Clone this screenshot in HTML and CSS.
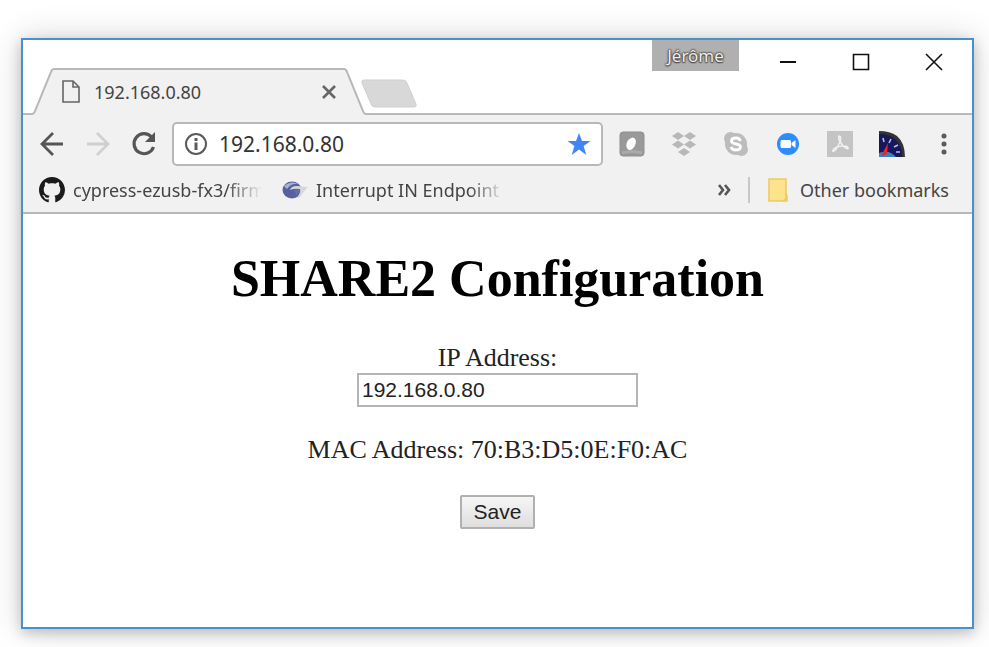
FILE: index.html
```html
<!DOCTYPE html>
<html lang="en">
<head>
    <meta charset="UTF-8">
    <meta name="viewport" content="width=device-width, initial-scale=1.0">
    <title>192.168.0.80</title>
    <link rel="stylesheet" href="styles.css">
</head>
<body>
    <div class="window">
        <div class="titlebar">
            <div class="tab">
                <svg class="tab-edge" width="22" height="47" viewBox="0 0 22 47">
                    <path d="M0 47V45Q2 45 3 43L20 3Q21 1 22 1V47Z" fill="#f1f1f1"/>
                    <path d="M0 46Q2 46 3 43L19 4Q20 1 22 1" fill="none" stroke="#b8b8b8" stroke-width="2"/>
                </svg>
                <div class="tab-body">
                    <svg width="18" height="24" viewBox="0 0 18 24" fill="none" stroke="#666" stroke-width="1.600">
                        <path d="M1 1H11L17 7V22H1Z"/>
                        <path d="M11 1V7H17"/>
                    </svg>
                    <span class="tab-title">192.168.0.80</span>
                    <button class="tab-close" aria-label="Close tab">
                        <svg width="14" height="14" viewBox="0 0 14 14" stroke="#666" stroke-width="2.600">
                            <path d="M1 1L13 13M13 1L1 13"/>
                        </svg>
                    </button>
                </div>
                <svg class="tab-edge" width="22" height="47" viewBox="0 0 22 47">
                    <path d="M22 47V45Q20 45 19 43L2 3Q1 1 0 1V47Z" fill="#f1f1f1"/>
                    <path d="M22 46Q20 46 19 43L3 4Q2 1 0 1" fill="none" stroke="#b8b8b8" stroke-width="2"/>
                </svg>
            </div>
            <button class="new-tab" aria-label="New tab">
                <svg width="58" height="30" viewBox="0 0 58 30">
                    <path d="M4 1H43Q46 1 47 4L56 25Q57 28 54 28H15Q12 28 11 25L2 4Q1 1 4 1Z" fill="#d8d8d8" stroke="#d0d0d0"/>
                </svg>
            </button>
            <div class="window-controls">
                <button class="profile">Jérôme</button>
                <button class="control" aria-label="Minimize">
                    <svg width="18" height="18" viewBox="0 0 18 18"><path d="M1 9H17" stroke="#111" stroke-width="2"/></svg>
                </button>
                <button class="control" aria-label="Maximize">
                    <svg width="18" height="18" viewBox="0 0 18 18"><path d="M1.500 1.500H16.500V16.500H1.500Z" fill="none" stroke="#111" stroke-width="1.600"/></svg>
                </button>
                <button class="control" aria-label="Close">
                    <svg width="18" height="18" viewBox="0 0 18 18"><path d="M1 1L17 17M17 1L1 17" stroke="#111" stroke-width="1.600"/></svg>
                </button>
            </div>
        </div>

        <div class="toolbar">
            <button class="nav-button" aria-label="Back">
                <svg width="24" height="24" viewBox="0 0 24 24" fill="none" stroke="#555" stroke-width="2.800"><path d="M23 12H3M13 1L2 12L13 23"/></svg>
            </button>
            <button class="nav-button" aria-label="Forward">
                <svg width="24" height="24" viewBox="0 0 24 24" fill="none" stroke="#d0d0d0" stroke-width="2.800"><path d="M1 12H21M11 1L22 12L11 23"/></svg>
            </button>
            <button class="nav-button" aria-label="Reload">
                <svg width="26" height="26" viewBox="0 0 26 26">
                    <path d="M20.5 6A10 10 0 1 0 22.5 16" fill="none" stroke="#555" stroke-width="3.2"/>
                    <path d="M24 1V11H14Z" fill="#555"/>
                </svg>
            </button>
            <div class="omnibox">
                <svg width="24" height="24" viewBox="0 0 24 24">
                    <circle cx="12" cy="12" r="10" fill="none" stroke="#5a5a5a" stroke-width="2"/>
                    <path d="M10.5 6H13.5V9H10.5ZM10.5 10.5H13.5V18H10.5Z" fill="#5a5a5a"/>
                </svg>
                <input class="address" type="text" value="192.168.0.80" aria-label="Address">
                <button class="star" aria-label="Bookmark this page">
                    <svg width="24" height="24" viewBox="0 0 24 24"><path d="M12 1L15 9H23.500L16.600 14L19.300 23L12 17.600L4.700 23L7.400 14L.5 9H9Z" fill="#4285f4"/></svg>
                </button>
            </div>
            <div class="extensions">
                <button class="extension" aria-label="Extension">
                    <svg width="26" height="26" viewBox="0 0 26 26">
                        <rect x="1" y="1" width="24" height="24" rx="3" fill="#999" stroke="#8f8f8f"/>
                        <path d="M3 22Q13 19 23 22" fill="none" stroke="#aaa" stroke-width="3"/>
                        <path d="M14 6.500Q18 8 16.500 13Q14.500 19 10 19Q6 17 8 11Q10 7 14 6.500Z" fill="#fff"/>
                    </svg>
                </button>
                <button class="extension" aria-label="Dropbox">
                    <svg width="26" height="26" viewBox="0 0 26 26" fill="#b8b8b8">
                        <path d="M7 1L13 5L7 9L1 5ZM19 1L25 5L19 9L13 5ZM7 9.500L13 13.500L7 17.500L1 13.500ZM19 9.500L25 13.500L19 17.500L13 13.500ZM13 17L19 21L13 25L7 21Z"/>
                    </svg>
                </button>
                <button class="extension" aria-label="Skype">
                    <svg width="26" height="26" viewBox="0 0 26 26">
                        <circle cx="13" cy="13" r="11" fill="#bcbcbc"/>
                        <circle cx="7.500" cy="7.500" r="6.500" fill="#bcbcbc"/>
                        <circle cx="18.500" cy="18.500" r="6.500" fill="#bcbcbc"/>
                        <path d="M17.500 10Q16.500 7 13 7Q8.500 7 8.500 10Q8.500 12.300 13 13Q17.800 13.800 17.500 16.200Q17 19 13 19Q9 19 8 16" fill="none" stroke="#fff" stroke-width="2.800"/>
                    </svg>
                </button>
                <button class="extension" aria-label="Zoom">
                    <svg width="26" height="26" viewBox="0 0 26 26">
                        <circle cx="13" cy="13" r="11" fill="#2d8cff"/>
                        <rect x="5.500" y="9" width="10.500" height="8" rx="1.500" fill="#fff"/>
                        <path d="M16.500 12L20.500 9V17L16.500 14Z" fill="#fff"/>
                    </svg>
                </button>
                <button class="extension" aria-label="Acrobat">
                    <svg width="26" height="26" viewBox="0 0 26 26">
                        <rect width="26" height="26" fill="#c4c4c4"/>
                        <path d="M12 5Q14.500 5 13.300 10Q14.500 15 20 17.500Q22.500 18.500 20 15.500Q14 14 9 16.500Q5 19 6 20.500Q9 20.500 13 10.500Q11 7 12 5Z" fill="none" stroke="#f1f1f1" stroke-width="1.500"/>
                    </svg>
                </button>
                <button class="extension" aria-label="Speed test">
                    <svg width="26" height="26" viewBox="0 0 26 26">
                        <path d="M0 0Q11 0 18 5Q26 12 26 26H0Z" fill="#333"/>
                        <path d="M0 3Q10 3 16 8Q23 14 23 26H0Z" fill="#17175c"/>
                        <path d="M0 22Q10 18 17 26H0Z" fill="#3d7fc4"/>
                        <path d="M4 7L5 11M12 8L10 12M19 14L15 16M21 21L17 21" stroke="#b9bde0" stroke-width="1.600"/>
                        <path d="M9 12L8 23L2 25Z" fill="#e8262c"/>
                    </svg>
                </button>
                <button class="extension" aria-label="Menu">
                    <svg width="6" height="22" viewBox="0 0 6 22" fill="#5a5a5a"><circle cx="3" cy="3" r="2.500"/><circle cx="3" cy="11" r="2.500"/><circle cx="3" cy="19" r="2.500"/></svg>
                </button>
            </div>
        </div>

        <div class="bookmarks">
            <a class="bookmark" href="#">
                <svg width="26" height="26" viewBox="0 0 16 16">
                    <path fill="#1b1b1b" d="M8 0C3.580 0 0 3.580 0 8c0 3.540 2.290 6.530 5.470 7.590.4.070.55-.17.55-.38 0-.19-.01-.82-.01-1.490-2.010.37-2.530-.49-2.690-.94-.09-.23-.48-.94-.82-1.130-.28-.15-.68-.52-.01-.53.63-.01 1.080.58 1.230.82.72 1.210 1.870.87 2.330.66.07-.52.28-.87.51-1.070-1.780-.2-3.640-.89-3.640-3.950 0-.87.31-1.590.82-2.150-.08-.2-.36-1.020.08-2.120 0 0 .67-.21 2.200.82.64-.18 1.320-.27 2-.27s1.360.09 2 .27c1.530-1.040 2.200-.82 2.200-.82.44 1.100.16 1.920.08 2.120.51.56.82 1.270.82 2.150 0 3.070-1.870 3.750-3.650 3.950.29.25.54.73.54 1.480 0 1.070-.01 1.930-.01 2.200 0 .21.15.46.55.38A8.010 8.010 0 0 0 16 8c0-4.420-3.580-8-8-8z"/>
                </svg>
                <span class="bookmark-text">cypress-ezusb-fx3/firmware</span>
            </a>
            <a class="bookmark" href="#">
                <svg width="26" height="26" viewBox="0 0 26 26">
                    <ellipse cx="10" cy="13" rx="9.500" ry="8.500" fill="#56629f"/>
                    <path d="M2 9Q9 3 17 7Q9 6 5 12Z" fill="#a9b0d2"/>
                    <path d="M8 13Q9 9 15 9L26 10Q22 14 18 20L15 21Q19 15 18 12Q12 11 8 13Z" fill="#d5d7dd"/>
                    <path d="M12 13L18 12Q17 16 13 21Q15 16 12 13Z" fill="#66719f"/>
                </svg>
                <span class="bookmark-text">Interrupt IN Endpoint</span>
            </a>
            <div class="bookmarks-end">
                <button class="more" aria-label="More bookmarks">
                    <svg width="16" height="12" viewBox="0 0 16 12" fill="none" stroke="#555" stroke-width="2.600"><path d="M2 1L6 6L2 11M8 1L12 6L8 11"/></svg>
                </button>
                <a class="other" href="#">
                    <svg width="20" height="24" viewBox="0 0 20 24">
                        <path d="M1 1H18V16L19 18V23H1Z" fill="#fde48c" stroke="#ecc95f" stroke-width="1.500"/>
                        <path d="M18 15V19Q18 22 15 23" fill="none" stroke="#ecc95f" stroke-width="1.500"/>
                    </svg>
                    Other bookmarks
                </a>
            </div>
        </div>

        <form class="page">
            <h1>SHARE2 Configuration</h1>
            <label for="ip">IP Address:</label>
            <input class="ip" id="ip" type="text" value="192.168.0.80">
            <p>MAC Address: 70:B3:D5:0E:F0:AC</p>
            <button class="save" type="button">Save</button>
        </form>
    </div>
</body>
</html>
```
FILE: styles.css
```css
* {
    box-sizing: border-box;
}

body {
    margin: 0;
    padding: 38px 15px 18px 21px;
    min-height: 100vh;
    display: flex;
    background: #fff;
    font-family: "Noto Sans", "Open Sans", sans-serif;
    font-size: 18px;
    color: #444;
}

button {
    padding: 0;
    border: none;
    background: none;
    font-family: inherit;
}

svg {
    display: block;
    flex-shrink: 0;
}

.window {
    flex: 1;
    min-width: 0;
    display: flex;
    flex-direction: column;
    border: 2px solid #4a90cc;
    background: #fff;
    box-shadow: 0 4px 12px rgba(0, 0, 0, 0.2), 0 0 32px rgba(0, 0, 0, 0.16);
}

/* tab strip */
.titlebar {
    display: flex;
    align-items: flex-end;
    height: 75px;
    padding-left: 9px;
    border-bottom: 2px solid #b8b8b8;
}

.tab {
    display: flex;
    height: 47px;
    margin-bottom: -2px;
}

.tab-body {
    display: flex;
    align-items: center;
    width: 290px;
    padding: 0 8px 2px;
    border-top: 2px solid #b8b8b8;
    background: #f1f1f1;
}

.tab-title {
    flex: 1;
    margin-left: 14px;
}

.new-tab {
    margin: 0 0 4px -6px;
}

.window-controls {
    display: flex;
    align-self: flex-start;
    margin-left: auto;
    padding-right: 2px;
}

.profile {
    width: 87px;
    height: 31px;
    margin-right: 12px;
    background: #b0b0b0;
    color: #eee;
    font-size: 17px;
    text-shadow: 0 0 2px #444, 0 0 2px #444, 0 0 2px #444, 0 1px 1px #555;
}

.control {
    display: flex;
    align-items: center;
    justify-content: center;
    width: 73px;
    height: 44px;
}

/* address bar */
.toolbar {
    display: flex;
    align-items: center;
    padding: 7px 2px 4px 6px;
    background: #f1f1f1;
}

.nav-button,
.extension {
    display: flex;
    align-items: center;
    justify-content: center;
    width: 46px;
    height: 44px;
}

.extension {
    width: 52px;
}

.omnibox {
    flex: 1;
    min-width: 0;
    display: flex;
    align-items: center;
    height: 44px;
    margin: 0 3px 0 5px;
    padding: 0 10px;
    border: 2px solid #b8b8b8;
    border-radius: 5px;
    background: #fff;
}

.address {
    flex: 1;
    min-width: 0;
    margin-left: 11px;
    padding: 0;
    border: none;
    outline: none;
    background: none;
    font-family: inherit;
    font-size: 21px;
    color: #333;
}

.extensions {
    display: flex;
}

/* bookmarks bar */
.bookmarks {
    display: flex;
    align-items: center;
    gap: 20px;
    height: 44px;
    padding: 0 23px 3px 16px;
    border-bottom: 2px solid #b8b8b8;
    background: #f1f1f1;
}

.bookmark,
.other {
    display: flex;
    align-items: center;
    color: #444;
    text-decoration: none;
    white-space: nowrap;
}

.bookmark {
    gap: 8px;
    width: 223px;
}

.bookmark-text {
    flex: 1;
    overflow: hidden;
    -webkit-mask-image: linear-gradient(to left, transparent, #000 36px);
    mask-image: linear-gradient(to left, transparent, #000 36px);
}

.bookmarks-end {
    display: flex;
    align-items: center;
    margin-left: auto;
}

.more {
    padding-right: 15px;
}

.other {
    gap: 12px;
    height: 26px;
    padding-left: 18px;
    border-left: 2px solid #c8c8c8;
}

/* configuration page */
.page {
    display: flex;
    flex-direction: column;
    align-items: center;
    padding: 35px 8px;
    font-family: "Liberation Serif", "Times New Roman", serif;
    font-size: 26px;
    line-height: 30px;
    color: #222;
}

.page h1 {
    margin: 0 0 34px;
    font-size: 52px;
    line-height: 60px;
    color: #000;
}

.page p {
    margin: 28px 0 30px;
}

.ip,
.save {
    height: 34px;
    font-family: "Liberation Sans", Arial, sans-serif;
    font-size: 21px;
    color: #222;
}

.ip {
    width: 281px;
    padding: 0 3px;
    border: 2px solid #b4b4b4;
    background: #fff;
}

.save {
    width: 75px;
    border: 2px solid #b0b0b0;
    border-radius: 2px;
    background: linear-gradient(#f6f6f6, #dedede);
}
```
